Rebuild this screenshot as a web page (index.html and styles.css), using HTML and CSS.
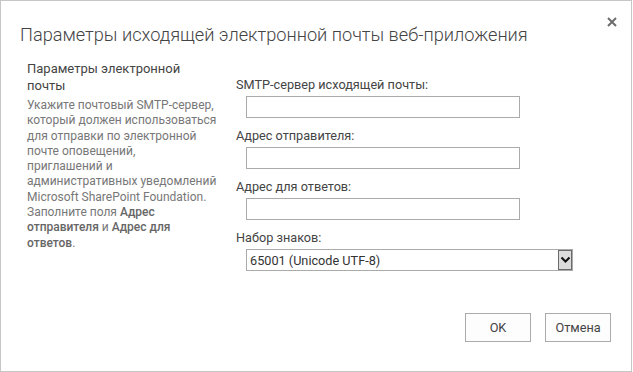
FILE: index.html
```html
<!DOCTYPE html>
<html lang="ru">
<head>
<meta charset="utf-8">
<title>Параметры исходящей электронной почты веб-приложения</title>
<link rel="stylesheet" href="styles.css">
</head>
<body>
<div class="dialog">
  <div class="title-bar">
    <h1 class="title">Параметры исходящей электронной почты веб-приложения</h1>
    <button class="close" aria-label="Закрыть">
      <svg width="10" height="10" viewBox="0 0 10 10"><path d="M1 1 L9 9 M9 1 L1 9" stroke="#6d6d6d" stroke-width="2" fill="none"/></svg>
    </button>
  </div>
  <div class="content">
    <div class="section-info">
      <h2 class="section-title">Параметры электронной<br>почты</h2>
      <p class="section-desc">Укажите почтовый SMTP-сервер,<br>который должен использоваться<br>для отправки по электронной<br>почте оповещений,<br>приглашений и<br>административных уведомлений<br>Microsoft SharePoint Foundation.<br>Заполните поля <b>Адрес</b><br><b>отправителя</b> и <b>Адрес для</b><br><b>ответов</b>.</p>
    </div>
    <div class="fields">
      <div class="field">
        <label class="field-label">SMTP-сервер исходящей почты:</label>
        <input class="text-input" type="text">
      </div>
      <div class="field">
        <label class="field-label">Адрес отправителя:</label>
        <input class="text-input" type="text">
      </div>
      <div class="field">
        <label class="field-label">Адрес для ответов:</label>
        <input class="text-input" type="text">
      </div>
      <div class="field">
        <label class="field-label">Набор знаков:</label>
        <div class="select">
          <span class="select-value">65001 (Unicode UTF-8)</span>
          <span class="select-arrow"><svg width="11" height="8" viewBox="0 0 11 8"><path d="M1.5 1.5 L5.5 5.5 L9.5 1.5" stroke="#111" stroke-width="2" fill="none"/></svg></span>
        </div>
      </div>
    </div>
  </div>
  <div class="footer">
    <button class="btn">OK</button>
    <button class="btn">Отмена</button>
  </div>
</div>
</body>
</html>
```
FILE: styles.css
```css
html, body {
  margin: 0;
  padding: 0;
  background: #fff;
}
body {
  font-family: Roboto, "Open Sans", sans-serif;
  color: #444;
}
.dialog {
  width: 632px;
  height: 372px;
  box-sizing: border-box;
  border: 1px solid #c6c6c6;
  display: flex;
  flex-direction: column;
}
.title-bar {
  display: flex;
  justify-content: space-between;
  align-items: flex-start;
  padding: 21px 14px 0 19px;
}
.title {
  margin: 0;
  font-weight: 300;
  font-size: 18.2px;
  line-height: 26px;
  color: #444;
}
.close {
  border: 0;
  background: none;
  padding: 0;
  margin-top: -5px;
  width: 10px;
  height: 10px;
  display: flex;
}
.content {
  display: flex;
  padding: 12px 0 0 26px;
}
.section-info {
  width: 190px;
  margin-right: 19px;
  white-space: nowrap;
}
.section-title {
  margin: 0 0 4px;
  font-weight: 400;
  font-size: 13px;
  line-height: 17px;
  color: #444;
}
.section-desc {
  margin: 0;
  font-size: 12px;
  line-height: 15.3px;
  color: #777;
}
.section-desc b {
  font-weight: 500;
  color: #666;
}
.fields {
  display: flex;
  flex-direction: column;
  padding-top: 17px;
}
.field {
  display: flex;
  flex-direction: column;
  align-items: flex-start;
  margin-bottom: 10px;
}
.field-label {
  font-size: 12.7px;
  line-height: 15px;
  margin-bottom: 4px;
  color: #444;
}
.text-input {
  margin: 0 0 0 10px;
  width: 274px;
  height: 22px;
  box-sizing: border-box;
  border: 1px solid #ababab;
  padding: 0;
}
.select {
  margin-left: 10px;
  width: 327px;
  height: 22px;
  box-sizing: border-box;
  border: 1px solid #ababab;
  display: flex;
  align-items: center;
  justify-content: space-between;
}
.select-value {
  font-size: 12.7px;
  color: #333;
  padding-left: 3px;
}
.select-arrow {
  width: 14px;
  height: 20px;
  box-sizing: border-box;
  background: #dcdcdc;
  border: 1px solid #6a6a6a;
  display: flex;
  align-items: center;
  justify-content: center;
}
.footer {
  display: flex;
  justify-content: flex-end;
  gap: 14px;
  padding: 0 20px 0 0;
  margin-top: auto;
  margin-bottom: 29px;
}
.btn {
  width: 66px;
  height: 29px;
  box-sizing: border-box;
  border: 1px solid #ababab;
  background: #fdfdfd;
  font-family: Roboto, "Open Sans", sans-serif;
  font-size: 12.7px;
  color: #444;
  padding: 0;
}
```
